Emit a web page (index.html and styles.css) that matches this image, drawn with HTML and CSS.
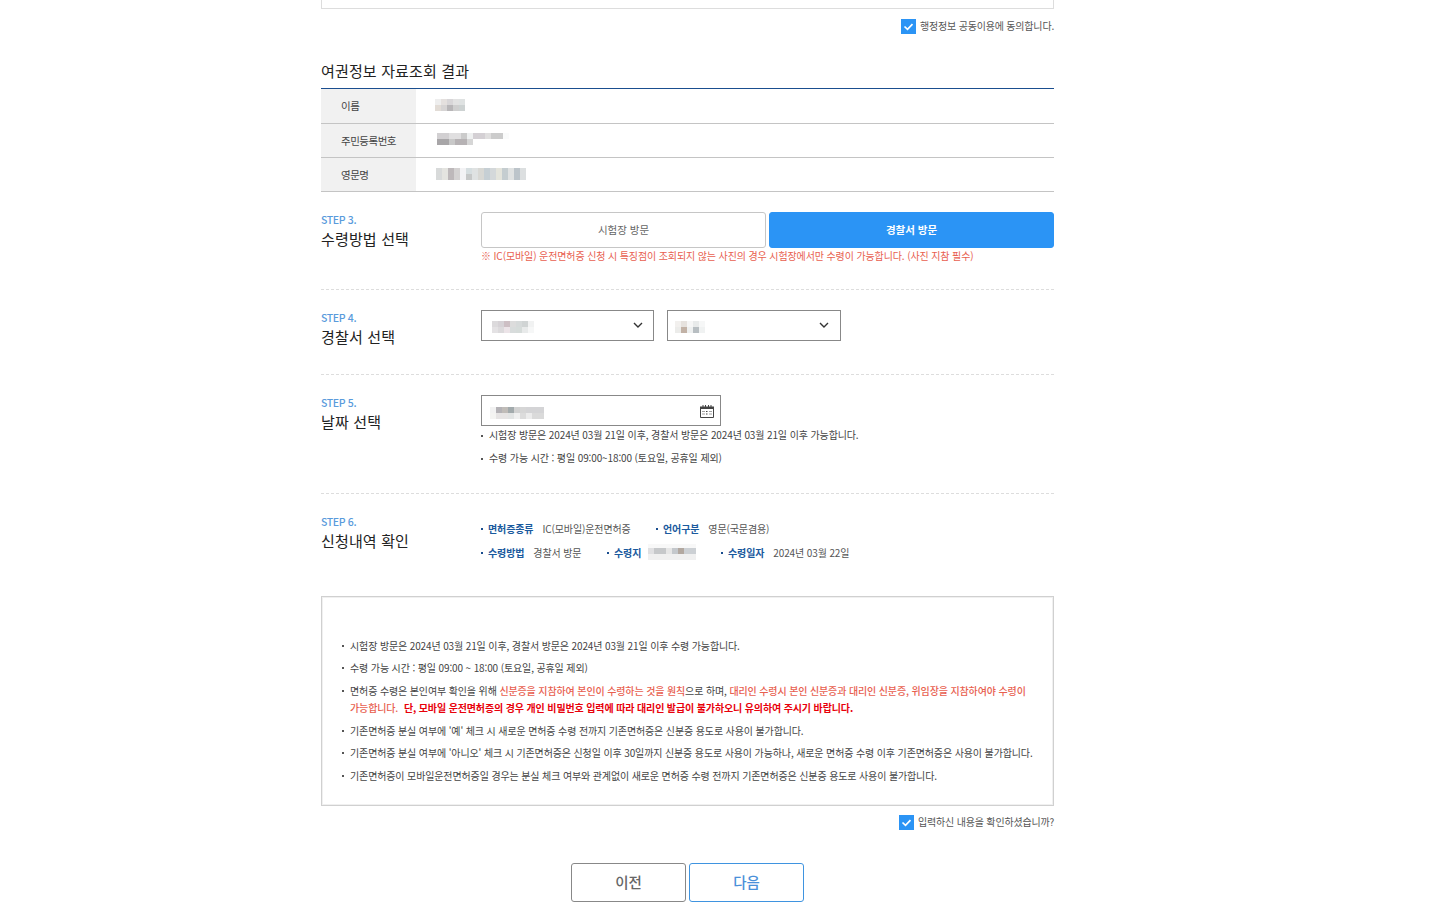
FILE: index.html
```html
<!DOCTYPE html>
<html lang="ko">
<head>
<meta charset="utf-8">
<title>여권정보 자료조회 결과</title>
<link rel="stylesheet" href="styles.css">
</head>
<body>
<main class="page">
  <div class="top-box"></div>
  <label class="agree agree-first">
    <span class="check"><svg viewBox="0 0 15 15" width="15" height="15"><path d="M3.500 7.500l3 2.800 5-5.200" fill="none" stroke="#fff" stroke-width="1.700"/></svg></span>
    <span class="agree-text">행정정보 공동이용에 동의합니다.</span>
  </label>

  <h2 class="title">여권정보 자료조회 결과</h2>
  <div class="info-table">
    <div class="info-row">
      <div class="info-head">이름</div>
      <div class="info-val val-name">
        <svg width="30" height="12" viewBox="0 0 30 12"><rect width="6" height="6" x="0" y="0" fill="#eee"/><rect width="6" height="6" x="6" y="0" fill="#e4e0de"/><rect width="6" height="6" x="12" y="0" fill="#d8d6d8"/><rect width="6" height="6" x="18" y="0" fill="#e2e2e2"/><rect width="6" height="6" x="24" y="0" fill="#dfe2e2"/><rect width="6" height="6" x="0" y="6" fill="#e2dcd6"/><rect width="6" height="6" x="6" y="6" fill="#d6d4d4"/><rect width="6" height="6" x="12" y="6" fill="#b8b6b8"/><rect width="6" height="6" x="18" y="6" fill="#cfcfcf"/><rect width="6" height="6" x="24" y="6" fill="#cdd2d2"/></svg>
      </div>
    </div>
    <div class="info-row">
      <div class="info-head">주민등록번호</div>
      <div class="info-val val-rrn">
        <svg width="72" height="12" viewBox="0 0 72 12"><rect x="0" y="0" width="12" height="6" fill="#d2d0d2"/><rect x="12" y="0" width="12" height="6" fill="#e0dfe0"/><rect x="24" y="0" width="6" height="6" fill="#cbcbcb"/><rect x="30" y="0" width="6" height="6" fill="#eef0f0"/><rect x="36" y="0" width="12" height="6" fill="#d4d0d4"/><rect x="48" y="0" width="6" height="6" fill="#e0dfdf"/><rect x="54" y="0" width="12" height="6" fill="#cccccc"/><rect x="66" y="0" width="6" height="6" fill="#fafbfb"/><rect x="0" y="6" width="12" height="6" fill="#a8a6a8"/><rect x="12" y="6" width="6" height="6" fill="#c8c8c8"/><rect x="18" y="6" width="12" height="6" fill="#b6b2b4"/><rect x="30" y="6" width="6" height="6" fill="#d6d6d6"/></svg>
      </div>
    </div>
    <div class="info-row">
      <div class="info-head">영문명</div>
      <div class="info-val val-eng">
        <svg width="90" height="12" viewBox="0 0 90 12"><rect x="0" y="0" width="6" height="12" fill="#d8dada"/><rect x="6" y="0" width="6" height="12" fill="#e4e4e0"/><rect x="12" y="0" width="6" height="12" fill="#bdb8ba"/><rect x="18" y="0" width="6" height="12" fill="#d4d2d2"/><rect x="24" y="0" width="6" height="12" fill="#f3f3f5"/><rect x="30" y="0" width="6" height="6" fill="#d6dee0"/><rect x="30" y="6" width="6" height="6" fill="#c6c8c8"/><rect x="36" y="0" width="6" height="12" fill="#dfe2e2"/><rect x="42" y="0" width="6" height="12" fill="#d8d8d4"/><rect x="48" y="0" width="6" height="12" fill="#c6cfd4"/><rect x="54" y="0" width="6" height="12" fill="#d4d8da"/><rect x="60" y="0" width="6" height="12" fill="#e4e4dc"/><rect x="66" y="0" width="6" height="12" fill="#c5cdd0"/><rect x="72" y="0" width="6" height="12" fill="#e0e2e2"/><rect x="78" y="0" width="6" height="12" fill="#bcc4ca"/><rect x="84" y="0" width="6" height="12" fill="#dcdfe0"/></svg>
      </div>
    </div>
  </div>

  <section class="step step-3">
    <div class="step-label"><p class="step-no">STEP 3.</p><h3 class="step-name">수령방법 선택</h3></div>
    <div class="step-body">
      <div class="choice">
        <button class="choice-btn" type="button">시험장 방문</button>
        <button class="choice-btn is-on" type="button">경찰서 방문</button>
      </div>
      <p class="warn">※ IC(모바일) 운전면허증 신청 시 특징점이 조회되지 않는 사진의 경우 시험장에서만 수령이 가능합니다. (사진 지참 필수)</p>
    </div>
  </section>

  <section class="step step-4">
    <div class="step-label"><p class="step-no">STEP 4.</p><h3 class="step-name">경찰서 선택</h3></div>
    <div class="step-body selects">
      <div class="select sel-a">
        <svg class="blur" width="42" height="12" viewBox="0 0 42 12"><rect x="0" width="6" height="6" fill="#dcdadc"/><rect x="6" width="6" height="6" fill="#d6d2d6"/><rect x="12" width="6" height="6" fill="#cdbfc4"/><rect x="18" width="6" height="6" fill="#dcdcdc"/><rect x="24" width="6" height="6" fill="#d6dada"/><rect x="30" width="6" height="6" fill="#d0d4d4"/><rect x="36" width="6" height="6" fill="#f1f2f2"/><rect x="0" y="6" width="6" height="6" fill="#e4e2e4"/><rect x="6" y="6" width="6" height="6" fill="#dcdadc"/><rect x="12" y="6" width="6" height="6" fill="#ece4e8"/><rect x="18" y="6" width="6" height="6" fill="#d8dcdc"/><rect x="24" y="6" width="6" height="6" fill="#d6dcda"/><rect x="30" y="6" width="6" height="6" fill="#e8eaea"/><rect x="36" y="6" width="6" height="6" fill="#f6f7f7"/></svg>
        <svg class="chev" width="10" height="7" viewBox="0 0 10 7"><path d="M1 1l4 4 4-4" fill="none" stroke="#333" stroke-width="1.400"/></svg>
      </div>
      <div class="select sel-b">
        <svg class="blur" width="30" height="12" viewBox="0 0 30 12"><rect x="0" width="6" height="6" fill="#f2f0ee"/><rect x="6" width="6" height="6" fill="#e6e2de"/><rect x="12" width="6" height="6" fill="#f6f6f6"/><rect x="18" width="6" height="6" fill="#e8eaea"/><rect x="24" width="6" height="6" fill="#f6f7f7"/><rect x="0" y="6" width="6" height="6" fill="#ececea"/><rect x="6" y="6" width="6" height="6" fill="#c2b2a6"/><rect x="12" y="6" width="6" height="6" fill="#eef0f0"/><rect x="18" y="6" width="6" height="6" fill="#b8bec2"/><rect x="24" y="6" width="6" height="6" fill="#f0f2f2"/></svg>
        <svg class="chev" width="10" height="7" viewBox="0 0 10 7"><path d="M1 1l4 4 4-4" fill="none" stroke="#333" stroke-width="1.400"/></svg>
      </div>
    </div>
  </section>

  <section class="step step-5">
    <div class="step-label"><p class="step-no">STEP 5.</p><h3 class="step-name">날짜 선택</h3></div>
    <div class="step-body">
      <div class="date">
        <svg class="blur-date" width="54" height="12" viewBox="0 0 54 12"><rect x="0" width="6" height="6" fill="#f2f2f2"/><rect x="6" width="6" height="6" fill="#b4b2b6"/><rect x="12" width="6" height="6" fill="#c0bcb8"/><rect x="18" width="6" height="6" fill="#a2aaac"/><rect x="24" width="6" height="6" fill="#d2d2d2"/><rect x="30" width="6" height="6" fill="#d6d6d6"/><rect x="36" width="18" height="6" fill="#d4d4d6"/><rect x="0" y="6" width="6" height="6" fill="#f4f4f2"/><rect x="6" y="6" width="12" height="6" fill="#e6e4e4"/><rect x="18" y="6" width="6" height="6" fill="#e2e4e4"/><rect x="24" y="6" width="6" height="6" fill="#f0f0f0"/><rect x="30" y="6" width="6" height="6" fill="#dcdcdc"/><rect x="36" y="6" width="6" height="6" fill="#ececec"/><rect x="42" y="6" width="12" height="6" fill="#dadada"/></svg>
        <svg class="cal" width="14" height="13" viewBox="0 0 14 13"><path d="M.5 2.500h13v10H.5z" fill="#fff" stroke="#444"/><path d="M0 1.500h14v2.500H0z" fill="#444"/><path d="M3 0v2M5.500 0v2M8.500 0v2M11 0v2" stroke="#444"/><path d="M2.500 6.500h2M6 6.500h2M9.500 6.500h2M2.500 9h2M6 9h2M9.500 9h2" stroke="#444" stroke-dasharray="1 .5"/></svg>
      </div>
      <ul class="dots date-notes">
        <li>시험장 방문은 2024년 03월 21일 이후, 경찰서 방문은 2024년 03월 21일 이후 가능합니다.</li>
        <li>수령 가능 시간 : 평일 09:00~18:00 (토요일, 공휴일 제외)</li>
      </ul>
    </div>
  </section>

  <section class="step step-6">
    <div class="step-label"><p class="step-no">STEP 6.</p><h3 class="step-name">신청내역 확인</h3></div>
    <div class="step-body summary">
      <div class="sum-row">
        <span class="sum-item item-kind"><b>면허증종류</b>IC(모바일)운전면허증</span>
        <span class="sum-item"><b>언어구분</b>영문(국문겸용)</span>
      </div>
      <div class="sum-row">
        <span class="sum-item item-way"><b>수령방법</b>경찰서 방문</span>
        <span class="sum-item item-place"><b>수령지</b><svg width="48" height="16" viewBox="0 0 48 16"><rect x="0" y="0" width="48" height="16" fill="#f8f8f8"/><rect x="0" y="4" width="6" height="6" fill="#e0e0e2"/><rect x="6" y="4" width="12" height="6" fill="#c6c8ca"/><rect x="18" y="4" width="6" height="6" fill="#e6e6e6"/><rect x="24" y="4" width="6" height="6" fill="#c4c8cc"/><rect x="30" y="4" width="6" height="6" fill="#b2a8a0"/><rect x="36" y="4" width="12" height="6" fill="#ccd0d4"/><rect x="0" y="10" width="48" height="6" fill="#f0f0f0"/></svg></span>
        <span class="sum-item"><b>수령일자</b>2024년 03월 22일</span>
      </div>
    </div>
  </section>

  <div class="notice">
    <ul class="dots notice-list">
      <li>시험장 방문은 2024년 03월 21일 이후, 경찰서 방문은 2024년 03월 21일 이후 수령 가능합니다.</li>
      <li>수령 가능 시간 : 평일 09:00 ~ 18:00 (토요일, 공휴일 제외)</li>
      <li>면허증 수령은 본인여부 확인을 위해 <em>신분증을 지참하여 본인이 수령하는 것을 원칙</em>으로 하며, <em>대리인 수령시 본인 신분증과 대리인 신분증, 위임장을 지참하여야 수령이 가능합니다.</em> <strong>단, 모바일 운전면허증의 경우 개인 비밀번호 입력에 따라 대리인 발급이 불가하오니 유의하여 주시기 바랍니다.</strong></li>
      <li>기존면허증 분실 여부에 '예' 체크 시 새로운 면허증 수령 전까지 기존면허증은 신분증 용도로 사용이 불가합니다.</li>
      <li>기존면허증 분실 여부에 '아니오' 체크 시 기존면허증은 신청일 이후 30일까지 신분증 용도로 사용이 가능하나, 새로운 면허증 수령 이후 기존면허증은 사용이 불가합니다.</li>
      <li>기존면허증이 모바일운전면허증일 경우는 분실 체크 여부와 관계없이 새로운 면허증 수령 전까지 기존면허증은 신분증 용도로 사용이 불가합니다.</li>
    </ul>
  </div>

  <label class="agree agree-last">
    <span class="check"><svg viewBox="0 0 15 15" width="15" height="15"><path d="M3.500 7.500l3 2.800 5-5.200" fill="none" stroke="#fff" stroke-width="1.700"/></svg></span>
    <span class="agree-text">입력하신 내용을 확인하셨습니까?</span>
  </label>

  <div class="actions">
    <button class="act act-prev" type="button">이전</button>
    <button class="act act-next" type="button">다음</button>
  </div>
</main>
</body>
</html>
```

FILE: styles.css
```css
* { box-sizing: border-box; }
html, body { margin: 0; padding: 0; background: #fff; }
body {
  font-family: "Noto Sans CJK KR", "Noto Sans", sans-serif;
  color: #555;
  font-size: 10px;
  overflow: hidden;
  height: 920px;
}
p, h2, h3, ul { margin: 0; padding: 0; }
ul { list-style: none; }
svg { display: block; }

.page { width: 733px; margin-left: 321px; }

.top-box {
  height: 9px;
  border: 1px solid #ddd;
  border-top: 0;
}

.agree {
  display: flex;
  justify-content: flex-end;
  align-items: center;
  gap: 4px;
  height: 15px;
  font-size: 10px;
  letter-spacing: -0.19px;
}
.agree-text { line-height: 15px; padding-bottom: 2px; }
.agree-first { margin-top: 10px; }
.check { width: 15px; height: 15px; background: #2b94f5; flex: none; }

.title {
  margin-top: 26px;
  height: 28px;
  line-height: 21px;
  font-size: 15px;
  font-weight: 400;
  color: #222;
  letter-spacing: 0.15px;
}

.info-table { border-top: 1px solid #1a4e8f; }
.info-row {
  display: flex;
  height: 34px;
  border-bottom: 1px solid #c4c4c4;
}
.info-row:first-child { height: 35px; }
.info-row:first-child .info-head { padding-bottom: 1px; }
.info-head {
  width: 95px;
  background: #f1f1f1;
  padding-left: 20px;
  display: flex;
  align-items: center;
  font-size: 10.5px;
  letter-spacing: -0.5px;
  color: #444;
}
.info-val { padding-left: 19px; padding-top: 10px; }
.val-rrn { padding-left: 21px; padding-top: 9px; }
.val-eng { padding-left: 20px; padding-top: 10px; }

.step {
  display: flex;
  border-bottom: 1px dashed #ddd;
}
.step-label { width: 160px; flex: none; padding-top: 1px; }
.step-no { font-size: 10.5px; line-height: 14px; color: #5a9bdc; font-weight: 500; letter-spacing: -0.35px; }
.step-name { font-size: 15px; line-height: 22px; margin-top: 1px; font-weight: 400; color: #222; letter-spacing: 0.15px; }
.step-body { flex: 1; }

.step-3 { margin-top: 20px; height: 78px; }
.choice { display: flex; gap: 3px; }
.choice-btn {
  flex: 1;
  height: 36px;
  background: #fff;
  border: 1px solid #c6c6c6;
  border-radius: 3px;
  font: inherit;
  font-size: 10.5px;
  letter-spacing: 0;
  color: #666;
  padding: 0 0 1px;
}
.choice-btn.is-on { background: #2b94f5; border-color: #2b94f5; color: #fff; font-weight: 700; }
.warn { font-size: 10px; line-height: 16px; color: #e8604f; letter-spacing: -0.12px; }

.step-4 { margin-top: 20px; height: 65px; }
.selects { display: flex; gap: 13px; }
.select {
  height: 31px;
  border: 1px solid #888;
  display: flex;
  align-items: center;
  justify-content: space-between;
  padding: 0 10px;
}
.blur { margin-top: 3px; }
.sel-a { width: 173px; }
.sel-b { width: 174px; padding-left: 7px; padding-right: 11px; }

.step-5 { margin-top: 20px; height: 99px; }
.date {
  width: 240px;
  height: 31px;
  border: 1px solid #888;
  display: flex;
  align-items: center;
  justify-content: space-between;
  padding: 0 6px 0 8px;
}
.blur-date { margin-top: 5px; }
.cal { margin-top: 1px; }

.dots li { position: relative; padding-left: 8px; }
.dots li::before {
  content: "";
  position: absolute;
  left: 0;
  top: 8px;
  width: 2px;
  height: 2px;
  background: #555;
}
.date-notes { margin-top: 1px; font-size: 10px; line-height: 16px; color: #444; letter-spacing: -0.12px; }
.date-notes li { margin-bottom: 7px; }

.step-6 { margin-top: 20px; border-bottom: 0; height: 82px; }
.summary { padding-top: 2px; font-size: 10px; color: #555; letter-spacing: -0.12px; }
.sum-row { display: flex; align-items: center; height: 24px; }
.sum-item { display: inline-flex; align-items: center; position: relative; padding-left: 7px; }
.sum-item::before {
  content: "";
  position: absolute;
  left: 0;
  top: 50%;
  width: 2px;
  height: 2px;
  background: #1a4e8f;
}
.sum-item b { color: #1a5a9e; font-weight: 700; margin-right: 9px; }
.item-kind { width: 175px; }
.item-way { width: 126px; }
.item-place { width: 114px; }
.item-place b { margin-right: 7px; }

.notice {
  height: 210px;
  border: 1px solid #d0d0d0;
  box-shadow: inset 0 0 0 1px #f0f0f0;
  padding: 39.75px 10px 0 19px;
  font-size: 10px;
  line-height: 17.5px;
  color: #444;
  letter-spacing: -0.13px;
  word-break: keep-all;
}
.notice-list li { margin-bottom: 5px; padding-left: 9px; }
.notice-list li::before { left: 1px; }
.notice-list em { font-style: normal; font-weight: 500; color: #e8604f; }
.notice-list strong { color: #e8000a; font-weight: 700; margin-left: 3px; }

.agree-last { margin-top: 9px; }

.actions {
  display: flex;
  gap: 3px;
  margin-top: 33px;
  margin-left: 250px;
}
.act {
  width: 115px;
  height: 39px;
  background: #fff;
  border-radius: 3px;
  font: inherit;
  font-size: 14.5px;
  font-weight: 500;
  padding: 0 0 3px;
}
.act-prev { border: 1px solid #888; color: #666; }
.act-next { border: 1px solid #3f94e0; color: #4a90d9; }
```
